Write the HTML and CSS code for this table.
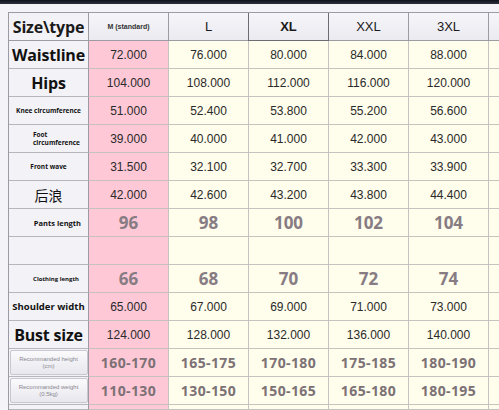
FILE: index.html
```html
<!DOCTYPE html>
<html>
<head>
<meta charset="utf-8">
<link rel="stylesheet" href="styles.css">
</head>
<body>
<div class="topbar"></div>
<div class="wrap">
  <div class="grid">
    <div class="c hd lab big">Size\type</div>
    <div class="c hd tiny-h">M (standard)</div>
    <div class="c hd">L</div>
    <div class="c hd sel">XL</div>
    <div class="c hd">XXL</div>
    <div class="c hd">3XL</div>
    <div class="c hd"></div>

    <div class="c lab big">Waistline</div>
    <div class="c m v">72.000</div><div class="c v">76.000</div><div class="c v">80.000</div><div class="c v">84.000</div><div class="c v">88.000</div><div class="c"></div>

    <div class="c lab big">Hips</div>
    <div class="c m v">104.000</div><div class="c v">108.000</div><div class="c v">112.000</div><div class="c v">116.000</div><div class="c v">120.000</div><div class="c"></div>

    <div class="c lab xs">Knee circumference</div>
    <div class="c m v">51.000</div><div class="c v">52.400</div><div class="c v">53.800</div><div class="c v">55.200</div><div class="c v">56.600</div><div class="c"></div>

    <div class="c lab xs two"><span>Foot<br>circumference</span></div>
    <div class="c m v">39.000</div><div class="c v">40.000</div><div class="c v">41.000</div><div class="c v">42.000</div><div class="c v">43.000</div><div class="c"></div>

    <div class="c lab xs">Front wave</div>
    <div class="c m v">31.500</div><div class="c v">32.100</div><div class="c v">32.700</div><div class="c v">33.300</div><div class="c v">33.900</div><div class="c"></div>

    <div class="c lab cn">后浪</div>
    <div class="c m v">42.000</div><div class="c v">42.600</div><div class="c v">43.200</div><div class="c v">43.800</div><div class="c v">44.400</div><div class="c"></div>

    <div class="c lab sm right">Pants length</div>
    <div class="c m n">96</div><div class="c n">98</div><div class="c n">100</div><div class="c n">102</div><div class="c n">104</div><div class="c"></div>

    <div class="c lab"></div>
    <div class="c m"></div><div class="c"></div><div class="c"></div><div class="c"></div><div class="c"></div><div class="c"></div>

    <div class="c lab xxs right2">Clothing length</div>
    <div class="c m n">66</div><div class="c n">68</div><div class="c n">70</div><div class="c n">72</div><div class="c n">74</div><div class="c"></div>

    <div class="c lab md">Shoulder width</div>
    <div class="c m v">65.000</div><div class="c v">67.000</div><div class="c v">69.000</div><div class="c v">71.000</div><div class="c v">73.000</div><div class="c"></div>

    <div class="c lab big">Bust size</div>
    <div class="c m v">124.000</div><div class="c v">128.000</div><div class="c v">132.000</div><div class="c v">136.000</div><div class="c v">140.000</div><div class="c"></div>

    <div class="c lab"><div class="btn">Recommanded height<br>(cm)</div></div>
    <div class="c m r">160-170</div><div class="c r">165-175</div><div class="c r">170-180</div><div class="c r">175-185</div><div class="c r">180-190</div><div class="c"></div>

    <div class="c lab"><div class="btn">Recommanded weight<br>(0.5kg)</div></div>
    <div class="c m r">110-130</div><div class="c r">130-150</div><div class="c r">150-165</div><div class="c r">165-180</div><div class="c r">180-195</div><div class="c"></div>

    <div class="c lab"></div>
    <div class="c m"></div><div class="c"></div><div class="c"></div><div class="c"></div><div class="c"></div><div class="c"></div>
  </div>
</div>
</body>
</html>
```

FILE: styles.css
```css
html, body {
  margin: 0;
  padding: 0;
}
body {
  width: 499px;
  height: 410px;
  overflow: hidden;
  background: #f4f3f8;
  font-family: "Liberation Sans", Arial, sans-serif;
}
.topbar {
  height: 4px;
  background: linear-gradient(#10131c, #2b3040);
}
.wrap {
  padding: 8px 0 0 8px;
}
.grid {
  display: grid;
  grid-template-columns: repeat(6, 80px) 10px;
  grid-template-rows: repeat(14, 28px) 5px;
  width: 491px;
  border-left: 1px solid #9c9ba4;
  border-top: 1px solid #9c9ba4;
}
.c {
  box-sizing: border-box;
  border-right: 1px solid #c5c2c0;
  border-bottom: 1px solid #c5c2c0;
  background: #fffdeb;
  display: flex;
  align-items: center;
  justify-content: center;
  color: #2a2a2a;
  font-size: 12px;
  overflow: hidden;
}
.c:nth-child(7n) {
  border-right: none;
}
.c.m {
  background: #ffc8d6;
}
.c.lab {
  background: #f3f2f7;
  border-right-color: #9c9ba4;
  border-bottom-color: #b8b6bc;
  color: #111;
  font-family: "Open Sans", "Noto Sans", sans-serif;
  font-weight: 700;
}
.c.hd {
  background: linear-gradient(#f6f5f9, #ebeaf0);
  border-right-color: #9c9ba4;
  border-bottom-color: #9c9ba4;
  font-family: "Liberation Sans", Arial, sans-serif;
  font-size: 13px;
  color: #1a1a1a;
}
.c.hd.lab {
  background: #f3f2f7;
  font-family: "Open Sans", "Noto Sans", sans-serif;
}
.c.hd.sel {
  font-weight: 700;
  border: 1px solid #6d6c75;
  border-top: none;
  margin-left: -1px;
}
.c.hd.tiny-h {
  font-size: 7px;
  font-weight: 700;
  color: #333;
}
.c.lab.big {
  font-size: 16px;
  letter-spacing: -0.2px;
}
.xs {
  font-size: 6.5px;
}
.xxs {
  font-size: 6px;
}
.sm {
  font-size: 7.5px;
}
.md {
  font-size: 9.5px;
}
.two {
  justify-content: flex-start;
  padding-left: 24px;
  line-height: 1.15;
}
.right {
  justify-content: flex-end;
  padding-right: 7px;
}
.right2 {
  justify-content: flex-end;
  padding-right: 9px;
}
.c.lab.cn {
  font-family: "Noto Sans CJK SC", sans-serif;
  font-weight: 400;
  font-size: 14px;
}
.v {
  font-family: "Liberation Sans", Arial, sans-serif;
}
.n {
  font-family: "Open Sans", "Noto Sans", sans-serif;
  font-weight: 700;
  font-size: 17px;
  color: #877c83;
}
.r {
  font-family: "Open Sans", "Noto Sans", sans-serif;
  font-weight: 700;
  font-size: 14px;
  letter-spacing: 0.4px;
  color: #7c7175;
}
.btn {
  box-sizing: border-box;
  width: 78px;
  height: 25px;
  border: 1px solid #c9c8d0;
  border-radius: 2px;
  background: linear-gradient(#fafafc, #e8e7ee);
  font-family: "Liberation Sans", Arial, sans-serif;
  font-weight: 400;
  font-size: 6px;
  line-height: 7px;
  color: #8a8790;
  text-align: center;
  display: flex;
  align-items: center;
  justify-content: center;
}
```
